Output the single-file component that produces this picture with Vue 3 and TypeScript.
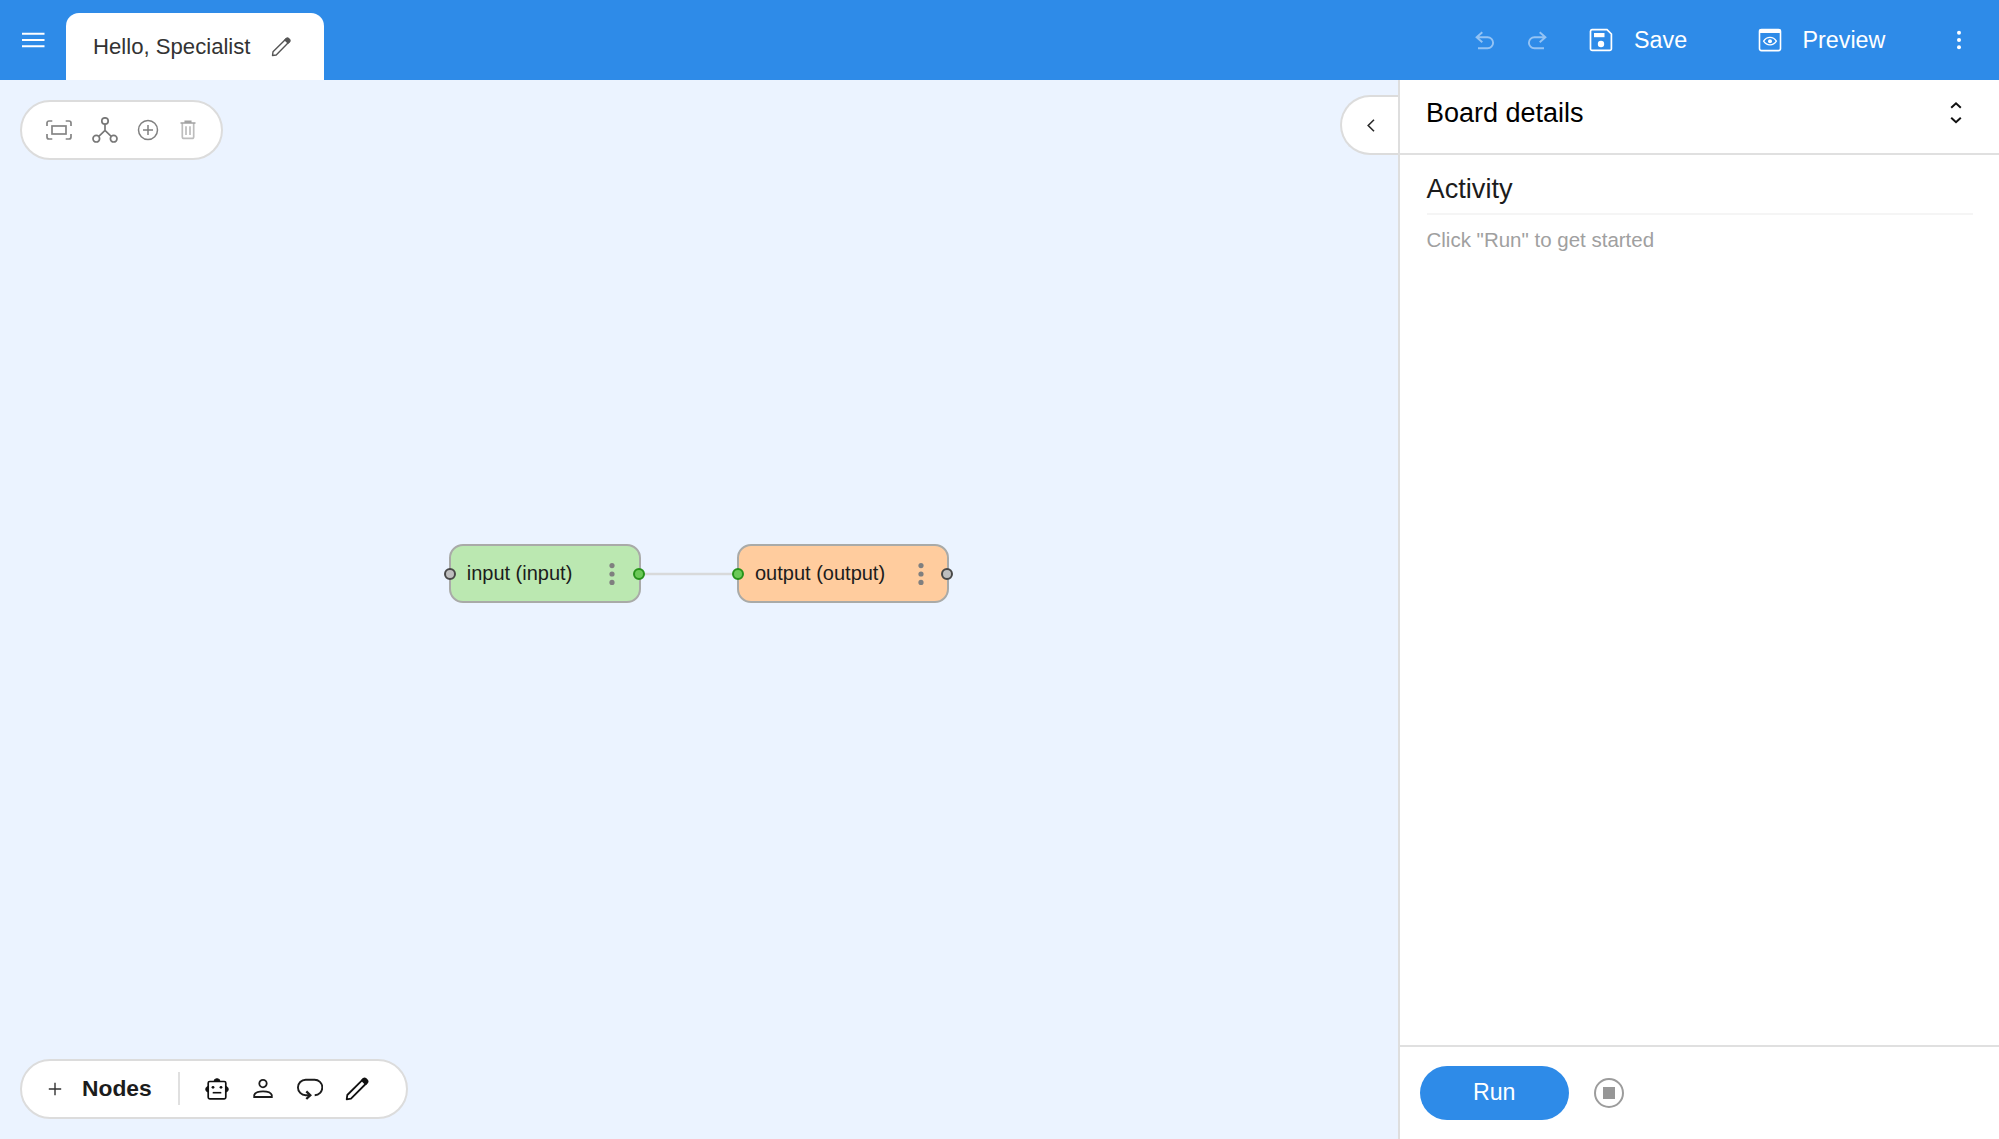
<script setup lang="ts">
interface BoardNode {
  id: string
  label: string
  x: number
  width: number
  color: string
  inConnected: boolean
  outConnected: boolean
}

const nodes: BoardNode[] = [
  { id: 'input', label: 'input (input)', x: 448.7, width: 192, color: '#bbe8b1', inConnected: false, outConnected: true },
  { id: 'output', label: 'output (output)', x: 737, width: 212.3, color: '#ffcc9e', inConnected: true, outConnected: false },
]
</script>

<template>
  <div class="app">
    <header class="topbar">
      <svg class="menu" width="24" height="16" viewBox="0 0 24 16" fill="none" stroke="#fff" stroke-width="2">
        <path d="M1 1.7h22.500M1 8h22.500M1 14.300h22.500" />
      </svg>
      <div class="tab">
        <span>Hello, Specialist</span>
        <svg class="tab-pen" width="20" height="20" viewBox="0 0 20 20" fill="none" stroke="#555" stroke-width="1.400" stroke-linejoin="round">
          <path d="M1.500 18.500l.5-3.700L15.200 1.800l3 3L5.200 18z" />
          <path d="M14 3l1.400-1.400a1.500 1.500 0 0 1 2.100 0l1 1a1.500 1.500 0 0 1 0 2.100l-1.400 1.400z" fill="#555" />
        </svg>
      </div>
      <div class="actions">
        <svg class="undo" width="20" height="20" viewBox="0 0 20 20" fill="none" stroke="#94c3f4" stroke-width="1.900">
          <path d="M7.300 1.300L1.600 6.300l5.700 5M2 6.300h10.600a5.500 5.500 0 0 1 0 11H3" />
        </svg>
        <svg class="redo" width="20" height="20" viewBox="0 0 20 20" fill="none" stroke="#94c3f4" stroke-width="1.900">
          <path d="M12.700 1.300l5.700 5-5.700 5M18 6.300H7.400a5.500 5.500 0 0 0 0 11H17" />
        </svg>
        <svg class="save-icon" width="24" height="24" viewBox="0 0 24 24" fill="none" stroke="#fff" stroke-width="1.700">
          <path d="M3 1.600h15l4.400 4.400v14.700a1.700 1.700 0 0 1-1.700 1.700H3.200a1.700 1.700 0 0 1-1.700-1.700V3.200A1.700 1.700 0 0 1 3 1.600z" />
          <path d="M5 5h10.500v4.200H5z" fill="#fff" stroke="none" />
          <circle cx="12" cy="16" r="3.200" fill="#fff" stroke="none" />
        </svg>
        <span class="save">Save</span>
        <svg class="preview-icon" width="24" height="24" viewBox="0 0 24 24" fill="none" stroke="#fff" stroke-width="1.600">
          <rect x="1.500" y="1.600" width="21" height="21" rx="2" />
          <path d="M1 5V3a2 2 0 0 1 2-2h18a2 2 0 0 1 2 2v2z" fill="#fff" stroke="none" />
          <path d="M5.600 13.200c3.200-5 9.600-5 12.800 0-3.200 5-9.600 5-12.800 0z" stroke-width="1.300" />
          <circle cx="12" cy="13.200" r="2" fill="#fff" stroke="none" />
        </svg>
        <span class="preview">Preview</span>
        <svg class="more" width="6" height="22" viewBox="0 0 6 22" fill="#fff">
          <circle cx="3" cy="3.800" r="2" /><circle cx="3" cy="11" r="2" /><circle cx="3" cy="18.200" r="2" />
        </svg>
      </div>
    </header>

    <div class="body">
      <main class="canvas">
        <div class="tools">
          <svg class="t-fit" width="26" height="20" viewBox="0 0 26 20" fill="none" stroke="#858585" stroke-width="1.700">
            <path d="M1 6V3a2 2 0 0 1 2-2h3.300M1 14v3a2 2 0 0 0 2 2h3.300M25 6V3a2 2 0 0 0-2-2h-3.300M25 14v3a2 2 0 0 1-2 2h-3.300" />
            <rect x="6" y="6" width="14" height="8" />
          </svg>
          <svg class="t-tree" width="26" height="26" viewBox="0 0 26 26" fill="none" stroke="#777" stroke-width="1.700">
            <circle cx="13" cy="4" r="3.200" /><circle cx="4.300" cy="21.700" r="3.300" /><circle cx="21.700" cy="21.700" r="3.300" />
            <path d="M13 7.300v6.200M6.800 19.400L13 13.500l6.200 5.900" />
          </svg>
          <svg class="t-add" width="22" height="22" viewBox="0 0 22 22" fill="none" stroke="#808080" stroke-width="1.500">
            <circle cx="11" cy="11" r="9.500" /><path d="M11 6v10M6 11h10" />
          </svg>
          <svg class="t-trash" width="16" height="20" viewBox="0 0 16 20" fill="none" stroke="#bdbdbd" stroke-width="1.700">
            <path d="M2.300 3v13.700a1.700 1.700 0 0 0 1.700 1.700h8a1.700 1.700 0 0 0 1.700-1.700V3" />
            <path d="M6 6.300v8.700M10 6.300v8.700" />
            <path d="M.5 3h15M5.300 2.700V1.400h5.400v1.300" stroke="#a2a2a2" />
          </svg>
        </div>

        <svg class="edge" width="104" height="4" viewBox="0 0 104 4">
          <path d="M0 2h104" stroke="#d8d9da" stroke-width="2.600" />
        </svg>
        <div
          v-for="node in nodes"
          :key="node.id"
          class="node"
          :style="{ left: node.x + 'px', width: node.width + 'px', background: node.color }"
        >
          <i class="port in" :class="{ on: node.inConnected }"></i>
          <span>{{ node.label }}</span>
          <svg class="node-menu" width="6" height="24" viewBox="0 0 6 24" fill="#7f7f7f">
            <circle cx="3" cy="3.600" r="2.600" /><circle cx="3" cy="12" r="2.600" /><circle cx="3" cy="20.400" r="2.600" />
          </svg>
          <i class="port out" :class="{ on: node.outConnected }"></i>
        </div>

        <div class="palette">
          <svg class="plus" width="14" height="14" viewBox="0 0 14 14" stroke="#333" stroke-width="1.400">
            <path d="M7 .8v12.400M.8 7h12.400" />
          </svg>
          <b>Nodes</b>
          <span class="rule"></span>
          <svg class="p-bot" width="26" height="22" viewBox="0 0 26 22" fill="none" stroke="#111" stroke-width="1.700">
            <rect x="4.200" y="3.500" width="17.600" height="17.300" rx="1.500" />
            <path d="M10 3.500a3 2.800 0 0 1 6 0zM4 8.500v5.500a2.800 2.800 0 0 1 0-5.500zM22 8.500v5.500a2.800 2.800 0 0 0 0-5.500z" fill="#111" stroke-width="1" />
            <path d="M8.700 14.700h8.600" stroke-width="1.600" />
            <circle cx="9" cy="9.300" r="1.400" fill="#111" stroke="none" /><circle cx="17" cy="9.300" r="1.400" fill="#111" stroke="none" />
          </svg>
          <svg class="p-user" width="20" height="20" viewBox="0 0 20 20" fill="none" stroke="#1c1c1c" stroke-width="1.800">
            <circle cx="10" cy="4.600" r="3.700" />
            <path d="M1.200 18v-1.900c1.700-5 15.900-5 17.600 0V18z" />
          </svg>
          <svg class="p-loop" width="26" height="22" viewBox="0 0 26 22" fill="none" stroke="#1c1c1c" stroke-width="1.900">
            <path d="M12.500 17.200H8.700a7.750 7.750 0 0 1 0-15.500h8.700a7.750 7.750 0 0 1 .3 15.500" />
            <path d="M9.300 13.400l4 3.800-4 3.800" stroke-width="2.300" />
          </svg>
          <svg class="p-pen" width="24" height="24" viewBox="0 0 24 24" fill="none" stroke="#111" stroke-width="1.800" stroke-linejoin="round">
            <path d="M1.700 22.300l.6-4.300L18 2.400l3.600 3.600L6 21.700z" />
            <path d="M17 3.300l1.300-1.300a1.800 1.800 0 0 1 2.500 0l1.200 1.200a1.800 1.800 0 0 1 0 2.500L20.700 7z" fill="#111" />
          </svg>
        </div>

        <div class="collapse">
          <svg width="8" height="13" viewBox="0 0 8 13" fill="none" stroke="#2a2a2a" stroke-width="1.600">
            <path d="M7 .7L1.200 6.500 7 12.300" />
          </svg>
        </div>
      </main>

      <aside class="panel">
        <div class="details">
          <span>Board details</span>
          <svg width="12" height="24" viewBox="0 0 12 24" fill="none" stroke="#111" stroke-width="2">
            <path d="M1.200 6.800L6 2.300l4.800 4.500M1.200 16.700L6 21.200l4.800-4.500" />
          </svg>
        </div>
        <section class="activity">
          <div class="activity-title">Activity</div>
          <div class="hint">Click "Run" to get started</div>
        </section>
        <footer class="runbar">
          <button class="run">Run</button>
          <span class="stop"><i></i></span>
        </footer>
      </aside>
    </div>
  </div>
</template>

<style>
body {
  margin: 0;
  overflow: hidden;
}
</style>

<style scoped>
.app {
  width: 1999px;
  height: 1139px;
  display: flex;
  flex-direction: column;
  font-family: "Liberation Sans", Arial, sans-serif;
  color: #1c1c1c;
  background: #fff;
  overflow: hidden;
}
.app * {
  box-sizing: border-box;
}
svg {
  display: block;
  flex: none;
}
span,
b {
  white-space: nowrap;
}
.topbar {
  height: 80px;
  flex: none;
  display: flex;
  align-items: center;
  background: #2e8be8;
}
.menu {
  margin-left: 21px;
}
.tab {
  align-self: flex-end;
  width: 258px;
  height: 66.600px;
  margin-left: 21.300px;
  padding-left: 26.700px;
  display: flex;
  align-items: center;
  background: #fff;
  border-radius: 13px 13px 0 0;
  font-size: 22.150px;
  color: #333;
}
.tab-pen {
  margin-left: 20.500px;
}
.actions {
  margin-left: auto;
  display: flex;
  align-items: center;
  color: #fff;
  font-size: 23.300px;
}
.redo {
  margin-left: 32.500px;
}
.undo,
.redo {
  position: relative;
  top: 1px;
}
.save-icon {
  margin-left: 42px;
}
.save {
  width: 145px;
  padding-left: 21px;
}
.preview {
  width: 174px;
  padding-left: 20.500px;
}
.more {
  margin: 0 37px 0 0;
}
.body {
  flex: 1;
  display: flex;
  min-height: 0;
}
.canvas {
  position: relative;
  width: 1398px;
  display: flex;
  flex-direction: column;
  justify-content: space-between;
  align-items: flex-start;
  padding: 20px 0 20.500px 20px;
  background: #ebf3ff;
}
.tools,
.palette {
  display: flex;
  align-items: center;
  background: #fff;
  border: 2px solid #dcdcdc;
  border-radius: 30px;
}
.tools {
  width: 203px;
  height: 59.500px;
  padding-left: 23.500px;
}
.t-tree {
  margin-left: 20.500px;
}
.t-add {
  margin-left: 19px;
}
.t-trash {
  margin-left: 21px;
}
.palette {
  width: 388px;
  height: 59.500px;
  padding-left: 26px;
}
.palette b {
  width: 96px;
  margin-left: 20px;
  font-size: 22.800px;
}
.rule {
  width: 2px;
  height: 33px;
  background: #e0e0e0;
}
.p-bot {
  margin-left: 23.500px;
}
.p-user {
  margin-left: 23.500px;
}
.p-loop {
  margin-left: 24px;
}
.p-pen {
  margin-left: 21.500px;
}
.edge {
  position: absolute;
  left: 637px;
  top: 491.500px;
}
.node {
  position: absolute;
  top: 464px;
  height: 59px;
  display: flex;
  align-items: center;
  justify-content: space-between;
  padding: 0 23.500px 0 16px;
  border: 2px solid #a9aaa8;
  border-radius: 14px;
  font-size: 20px;
}
.port {
  position: absolute;
  top: 21.500px;
  width: 12px;
  height: 12px;
  border: 2px solid #484848;
  border-radius: 50%;
  background: #bebebe;
}
.port.in {
  left: -6.700px;
}
.port.out {
  right: -6px;
}
.port.on {
  border-color: #27931b;
  background: #6bc957;
}
.collapse {
  position: absolute;
  right: 0;
  top: 15px;
  width: 58px;
  height: 60px;
  display: flex;
  align-items: center;
  padding-left: 24.500px;
  background: #fff;
  border: 2px solid #dcdcdc;
  border-right: 0;
  border-radius: 30px 0 0 30px;
}
.panel {
  flex: 1;
  display: flex;
  flex-direction: column;
  background: #fff;
  border-left: 2px solid #dedede;
}
.details {
  height: 75px;
  display: flex;
  justify-content: space-between;
  padding: 18px 37.300px 0 26px;
  border-bottom: 2px solid #e0e0e0;
  font-size: 27px;
  line-height: 30px;
  color: #000;
}
.details svg {
  margin-top: 3px;
}
.activity {
  flex: 1;
  padding: 0 26.500px;
}
.activity-title {
  height: 60px;
  line-height: 67px;
  border-bottom: 2px solid #f5f5f5;
  font-size: 27.200px;
}
.hint {
  margin-top: 13px;
  font-size: 20.500px;
  line-height: 24px;
  color: #a0a0a0;
}
.runbar {
  height: 94px;
  display: flex;
  align-items: center;
  padding-left: 19.500px;
  border-top: 2px solid #e0e0e0;
}
.run {
  width: 149.500px;
  height: 53.500px;
  padding: 0 0 1px;
  border: 0;
  border-radius: 27px;
  background: #2e8be8;
  color: #fff;
  font: 23.200px "Liberation Sans", Arial, sans-serif;
}
.stop {
  width: 30px;
  height: 30px;
  margin-left: 25px;
  display: flex;
  align-items: center;
  justify-content: center;
  border: 2px solid #9c9c9c;
  border-radius: 50%;
}
.stop i {
  width: 11.500px;
  height: 11.500px;
  background: #979797;
}
</style>
